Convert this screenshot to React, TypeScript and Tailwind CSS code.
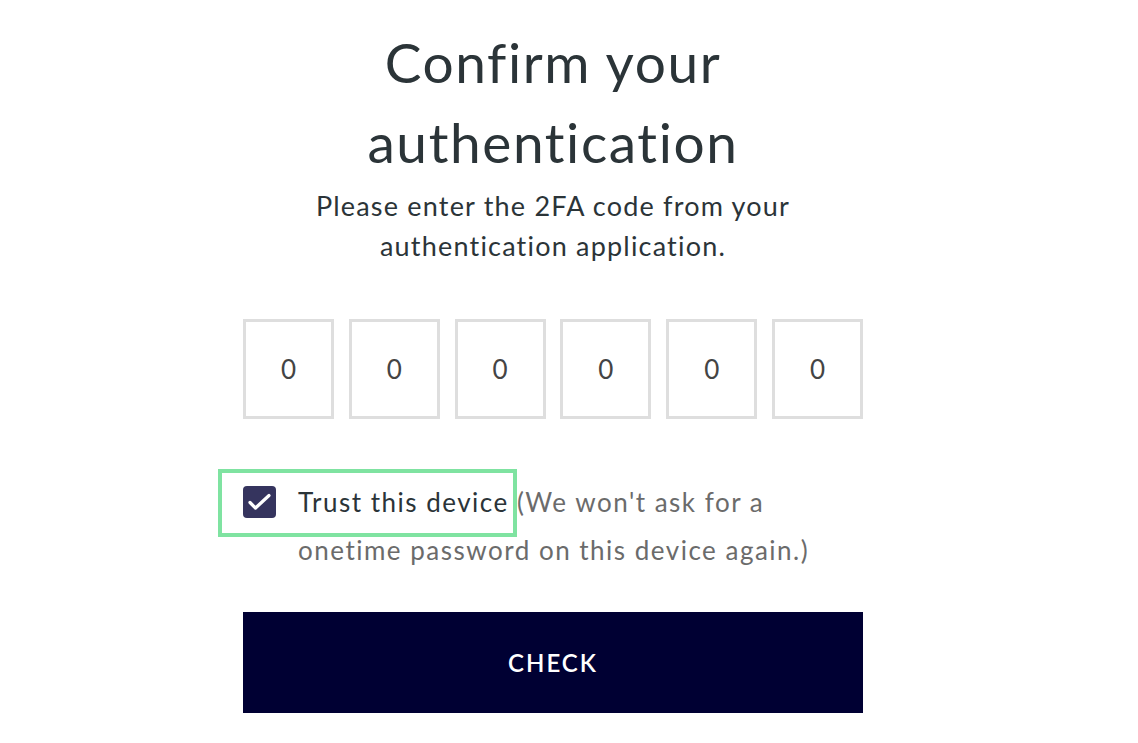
import { useState } from 'react'

const FONT = { fontFamily: 'Lato, "Noto Sans", sans-serif' }

export default function App() {
  const [code, setCode] = useState(['0', '0', '0', '0', '0', '0'])
  const [trust, setTrust] = useState(true)

  return (
    <div className="min-h-screen bg-white" style={FONT}>
      <div className="w-[620px] ml-[243px] flex flex-col items-center">
        {/* Heading */}
        <h1 className="mt-[22px] text-[55px] leading-[80px] tracking-[1.6px] text-[#2b3438] text-center">
          Confirm your<br />authentication
        </h1>
        <p className="mt-[4px] text-[27px] leading-[40px] tracking-[1.2px] text-[#2b3438] text-center">
          Please enter the 2FA code from your<br />authentication application.
        </p>

        {/* Code inputs */}
        <div className="mt-[53px] w-full flex justify-between">
          {code.map((d, i) => (
            <input
              key={i}
              value={d}
              maxLength={1}
              onChange={(e) => {
                const next = [...code]
                next[i] = e.target.value
                setCode(next)
              }}
              className="w-[91px] h-[100px] border-[3px] border-[#dedede] text-center text-[26px] text-[#444] outline-none"
            />
          ))}
        </div>

        {/* Trust device */}
        <div className="mt-[67px] w-full relative flex items-start">
          <div className="absolute left-[-25px] top-[-17px] w-[299px] h-[68px] border-[4px] border-[#7fe3a1] pointer-events-none" />
          <button
            onClick={() => setTrust(!trust)}
            className={`shrink-0 w-[33px] h-[32px] rounded-[4px] p-0 ${trust ? 'bg-[#35345e]' : 'bg-white border-2 border-[#35345e]'}`}
          >
            {trust && (
              <svg width="33" height="32" viewBox="0 0 33 32" fill="none">
                <path d="M7 16.5l5.5 5.5L26 9.5" stroke="white" strokeWidth="3.2" strokeLinecap="round" strokeLinejoin="round" />
              </svg>
            )}
          </button>
          <p className="ml-[22px] text-[26px] leading-[48px] tracking-[1.5px] mt-[-8px] w-[560px] text-[#6b6b6b]">
            <span className="text-[#2b3438]">Trust this device</span> (We won't ask for a<br />
            onetime password on this device again.)
          </p>
        </div>

        {/* Submit */}
        <button className="mt-[38px] w-full h-[101px] bg-[#000033] text-white text-[24px] font-semibold tracking-[2px]">
          CHECK
        </button>
      </div>
    </div>
  )
}
